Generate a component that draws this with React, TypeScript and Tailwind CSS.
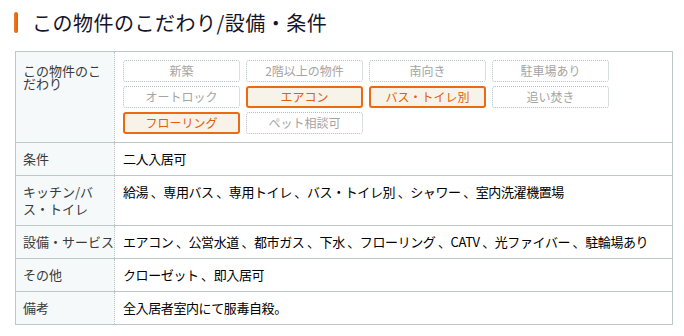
import React from "react";

type Feature = { label: string; active?: boolean };

const features: Feature[] = [
  { label: "新築" },
  { label: "2階以上の物件" },
  { label: "南向き" },
  { label: "駐車場あり" },
  { label: "オートロック" },
  { label: "エアコン", active: true },
  { label: "バス・トイレ別", active: true },
  { label: "追い焚き" },
  { label: "フローリング", active: true },
  { label: "ペット相談可" },
];

const rows: { label: string; items: string[]; tall?: boolean; nowrap?: boolean }[] = [
  { label: "条件", items: ["二人入居可"] },
  {
    label: "キッチン/バス・トイレ",
    items: ["給湯", "専用バス", "専用トイレ", "バス・トイレ別", "シャワー", "室内洗濯機置場"],
    tall: true,
  },
  {
    label: "設備・サービス",
    items: ["エアコン", "公営水道", "都市ガス", "下水", "フローリング", "CATV", "光ファイバー", "駐輪場あり"],
    nowrap: true,
  },
  { label: "その他", items: ["クローゼット", "即入居可"] },
  { label: "備考", items: ["全入居者室内にて服毒自殺。"] },
];

const FeatureTag = ({ label, active }: Feature) => (
  <div
    className={
      active
        ? "w-[117px] h-[22px] flex items-center justify-center rounded-[3px] border-2 border-[#ec6a12] bg-[#f7f3e8] text-[12px] text-[#e0600c]"
        : "w-[117px] h-[22px] flex items-center justify-center rounded-[3px] border border-dotted border-[#b4bebe] bg-white text-[12px] text-[#a4a4a4]"
    }
  >
    {label}
  </div>
);

export default function App() {
  return (
    <div
      className="w-[684px] h-[336px] bg-white overflow-hidden"
      style={{ fontFamily: '"Noto Sans CJK JP", "Liberation Sans", sans-serif' }}
    >
      {/* heading */}
      <div className="flex items-center pt-[12px] pl-[14px]">
        <div className="w-[4px] h-[21px] rounded-[2px] bg-gradient-to-r from-[#f07a1e] to-[#e2600e]" />
        <h2 className="ml-[14px] text-[20px] leading-[21px] tracking-[0.5px] text-[#14142a]">
          この物件のこだわり/設備・条件
        </h2>
      </div>

      {/* spec table */}
      <div className="ml-[15px] mt-[18px] w-[658px] border border-[#bcc8c8] text-[13px]">
        <div className="flex border-b border-[#bcc8c8]">
          <div className="w-[99px] shrink-0 bg-[#f5f9f9] border-r border-dotted border-[#bcc6c6] px-[7px] pt-[12px] leading-[13px] text-[#3a3a3a]">
            この物件のこだわり
          </div>
          <div className="flex-1 p-2">
            <div className="grid grid-cols-[repeat(4,117px)] gap-x-[6px] gap-y-[4px]">
              {features.map((f) => (
                <FeatureTag key={f.label} {...f} />
              ))}
            </div>
          </div>
        </div>

        {rows.map((row, i) => (
          <div
            key={row.label}
            className={i < rows.length - 1 ? "flex border-b border-[#bcc8c8]" : "flex"}
          >
            <div
              className={
                row.tall
                  ? "w-[99px] shrink-0 bg-[#f5f9f9] border-r border-dotted border-[#bcc6c6] px-[7px] py-2 leading-[16.5px] text-[#3a3a3a]"
                  : row.nowrap
                  ? "w-[99px] shrink-0 bg-[#f5f9f9] border-r border-dotted border-[#bcc6c6] px-[7px] py-2 leading-4 whitespace-nowrap text-[#3a3a3a]"
                  : "w-[99px] shrink-0 bg-[#f5f9f9] border-r border-dotted border-[#bcc6c6] px-[7px] py-2 leading-4 text-[#3a3a3a]"
              }
            >
              {row.label}
            </div>
            <div className="flex-1 px-2 py-2 leading-4 tracking-[-0.4px] whitespace-nowrap text-black">
              {row.items.join(" 、")}
            </div>
          </div>
        ))}
      </div>
    </div>
  );
}
